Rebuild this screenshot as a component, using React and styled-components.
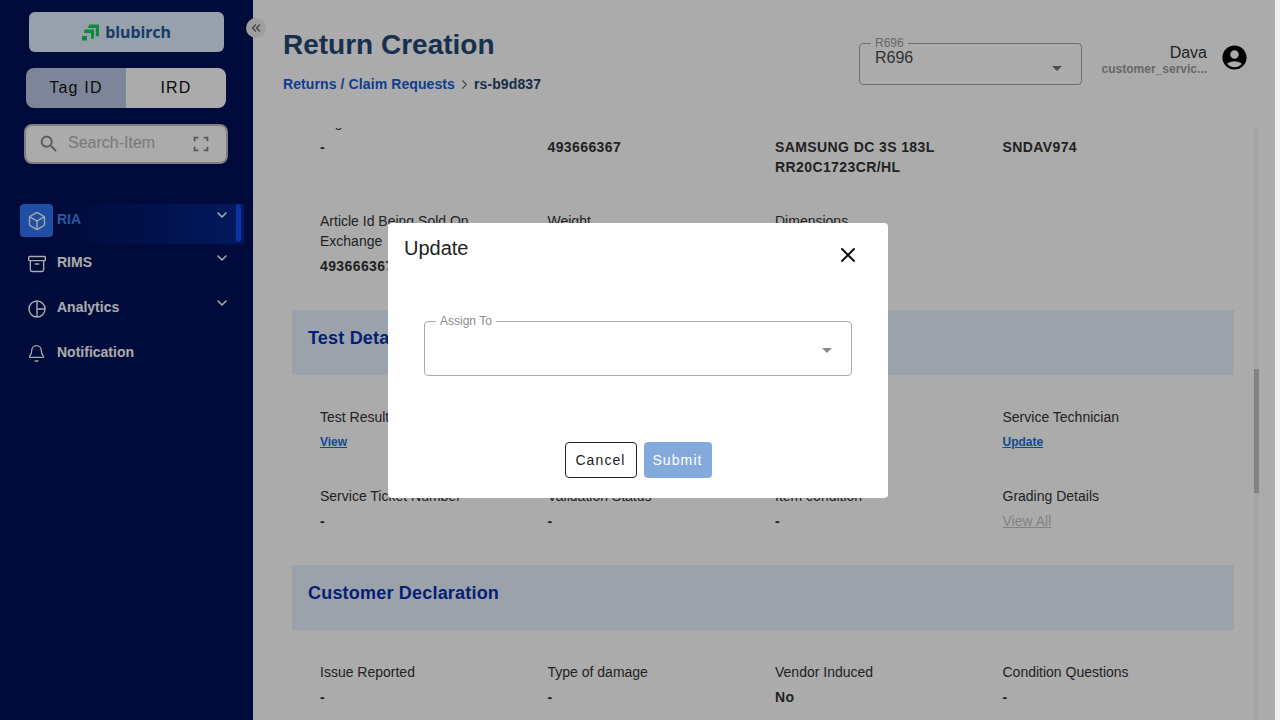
import React from "react";
import styled, { createGlobalStyle } from "styled-components";
import { Archive, Bell, Box, ChevronDown, ChevronRight, ChevronsLeft, X } from "lucide-react";

const GlobalStyle = createGlobalStyle`
	html, body {
		margin: 0;
		height: 100%;
		overflow: hidden;
		background: #f0f0f0;
	}
	* {
		box-sizing: border-box;
	}
	body {
		font-family: "Liberation Sans", Arial, sans-serif;
	}
`;

const Page = styled.div`
	display: flex;
	width: 1275px;
	height: 720px;
	background: #fff;
	position: relative;
	overflow: hidden;
`;

// sidebar
const Sidebar = styled.aside`
	width: 253px;
	flex: none;
	background: #001159;
	display: flex;
	flex-direction: column;
	position: relative;
`;

const LogoCard = styled.div`
	height: 40px;
	margin: 12px 29px 16px;
	background: #e3f1ff;
	border-radius: 6px;
	display: flex;
	align-items: center;
	justify-content: center;
	gap: 6px;
`;

const LogoText = styled.span`
	font-family: "Noto Sans", sans-serif;
	font-weight: 700;
	font-size: 16px;
	color: #1d5a9e;
`;

const Toggle = styled.div`
	height: 40px;
	margin: 0 27px 16px 26px;
	border-radius: 8px;
	overflow: hidden;
	display: grid;
	grid-template-columns: 1fr 1fr;
`;

const ToggleOption = styled.div`
	display: flex;
	align-items: center;
	justify-content: center;
	font-size: 16px;
	letter-spacing: 1.2px;
	color: #111;
	background: ${(p) => (p.$active ? "#bbc8e3" : "#fff")};
`;

const SearchBox = styled.div`
	height: 40px;
	margin: 0 25px 0 24px;
	background: #fff;
	border: 2px solid #bdbdbd;
	border-radius: 8px;
	display: flex;
	align-items: center;
	padding: 0 14px 0 12px;
	color: #858585;
`;

const SearchText = styled.span`
	flex: 1;
	font-size: 16px;
	color: #b4b4b4;
	margin-left: 8px;
	margin-top: -2px;
`;

const CollapseButton = styled.button`
	position: absolute;
	top: 18px;
	right: -13px;
	width: 20px;
	height: 20px;
	padding: 0;
	border: none;
	border-radius: 50%;
	background: #ececec;
	color: #666;
	display: flex;
	align-items: center;
	justify-content: center;
`;

const Nav = styled.nav`
	margin-top: 40px;
	display: flex;
	flex-direction: column;
`;

const NavItem = styled.div`
	height: ${(p) => p.$h || 45}px;
	display: flex;
	align-items: flex-start;
	margin-left: 20px;
	margin-right: 9px;
	position: relative;
	color: ${(p) => (p.$active ? "#3f84ea" : "#fff")};
	background: ${(p) =>
		p.$active ? "linear-gradient(90deg, rgba(0, 38, 140, 0) 20%, #00268c 100%)" : "none"};
	height: ${(p) => (p.$active ? 40 : 45)}px;
	margin-bottom: ${(p) => (p.$active ? 3 : 0)}px;
`;

const NavIcon = styled.div`
	width: 33px;
	height: 33px;
	flex: none;
	border-radius: 4px;
	display: flex;
	align-items: center;
	justify-content: center;
	color: #fff;
	background: ${(p) => (p.$active ? "#2f76f5" : "none")};
`;

const NavLabel = styled.span`
	flex: 1;
	font-size: 14px;
	font-weight: 700;
	line-height: 31px;
	margin-left: 4px;
`;

const NavChevron = styled.div`
	width: 16px;
	margin: 3px 14px 0 0;
	color: #fff;
`;

const ActiveBar = styled.div`
	position: absolute;
	top: 0;
	right: 3px;
	width: 5px;
	height: 38px;
	border-radius: 3px;
	background: #0f4cf0;
`;

// main column
const Main = styled.main`
	flex: 1;
	min-width: 0;
	display: flex;
	flex-direction: column;
`;

const Header = styled.header`
	height: 128px;
	flex: none;
	display: flex;
	justify-content: space-between;
	padding: 28px 26px 0 30px;
`;

const Title = styled.h1`
	margin: 0;
	font-size: 28px;
	line-height: 34px;
	font-weight: 700;
	color: #234874;
`;

const Crumbs = styled.div`
	display: flex;
	align-items: center;
	margin-top: 14px;
	font-size: 14px;
	font-weight: 700;
	letter-spacing: 0.1px;
`;

const CrumbLink = styled.span`
	color: #155bd8;
`;

const CrumbCurrent = styled.span`
	color: #274468;
`;

const CrumbSep = styled.span`
	display: flex;
	margin: 0 2px;
	color: #777;
`;

const HeaderRight = styled.div`
	display: flex;
	align-items: flex-start;
	margin-top: 9px;
`;

const OutlinedField = styled.fieldset`
	margin: 0;
	min-width: 0;
	position: relative;
	border-radius: 4px;
	border: 1px solid ${(p) => (p.$modal ? "#ababab" : "#a6a6a6")};
	width: ${(p) => (p.$modal ? 428 : 223)}px;
	height: ${(p) => (p.$modal ? 61 : 48)}px;
	padding: 0 15px;
`;

const FieldLegend = styled.legend`
	font-size: 12px;
	line-height: 12px;
	padding: 0 4px;
	margin-left: -4px;
	color: ${(p) => (p.$modal ? "#8c8c8c" : "#9a9a9a")};
`;

const FieldValue = styled.div`
	font-size: 16px;
	line-height: 20px;
	margin-top: -1px;
	color: #4b4b4b;
`;

const FieldArrow = styled.span`
	position: absolute;
	right: 19px;
	top: ${(p) => (p.$modal ? 21 : 17)}px;
	width: 0;
	height: 0;
	border-left: 5px solid transparent;
	border-right: 5px solid transparent;
	border-top: 5px solid ${(p) => (p.$modal ? "#8a8a8a" : "#747474")};
`;

const UserBlock = styled.div`
	width: 125px;
	text-align: right;
	padding-top: 7px;
`;

const UserName = styled.div`
	font-size: 16px;
	line-height: 18px;
	color: #333;
`;

const UserRole = styled.div`
	font-size: 12px;
	line-height: 14px;
	font-weight: 700;
	color: #9b9b9b;
	white-space: nowrap;
`;

const Avatar = styled.svg`
	width: 29px;
	height: 29px;
	margin: 6px 0 0 13px;
	fill: #000;
`;

// scrolled details
const ScrollArea = styled.div`
	flex: 1;
	min-height: 0;
	display: flex;
	padding-left: 39px;
	overflow: hidden;
`;

const ScrollContent = styled.div`
	flex: 1;
	min-width: 0;
	margin-top: -16px;
	margin-right: 20px;
`;

const Track = styled.div`
	width: 5px;
	margin-top: 1px;
	margin-right: 16px;
	background: #f5f5f5;
	padding-top: 240px;
`;

const Thumb = styled.div`
	height: 124px;
	background: #c2c2c2;
`;

const Fields = styled.div`
	display: grid;
	grid-template-columns: repeat(4, 1fr);
	row-gap: 34px;
	padding: ${(p) => (p.$afterBand ? "32px" : "0")} 4px 34px 28px;
`;

const Band = styled.div`
	height: 65px;
	background: #e9f2ff;
	padding: 16px 16px 0;
	font-size: 18px;
	line-height: 24px;
	font-weight: 700;
	color: #0530b0;
	letter-spacing: 0.2px;
`;

const Field = styled.div`
	padding-right: 24px;
`;

const Label = styled.div`
	font-size: 14px;
	line-height: 20px;
	color: #333;
	margin-bottom: 5px;
`;

const Value = styled.div`
	font-size: 14px;
	line-height: 20px;
	font-weight: 700;
	letter-spacing: 0.4px;
	color: #333;
`;

const SmallLink = styled.a`
	display: block;
	font-size: 12px;
	line-height: 20px;
	font-weight: 700;
	color: #1a6fd0;
	text-decoration: underline;
`;

const MutedLink = styled.a`
	display: block;
	font-size: 14px;
	line-height: 20px;
	color: #c4c4c4;
	text-decoration: underline;
`;

// dialog
const Backdrop = styled.div`
	position: absolute;
	inset: 0;
	background: rgba(0, 0, 0, 0.33);
	display: flex;
	align-items: center;
	justify-content: center;
	padding-left: 1px;
`;

const Dialog = styled.div`
	width: 500px;
	height: 275px;
	background: #fff;
	border-radius: 4px;
	display: flex;
	flex-direction: column;
	margin-top: 1px;
`;

const DialogHead = styled.div`
	display: flex;
	justify-content: space-between;
	padding: 13px 28px 0 16px;
	height: 92px;
`;

const DialogTitle = styled.h2`
	margin: 0;
	font-size: 20px;
	line-height: 24px;
	font-weight: 400;
	color: #222;
`;

const CloseButton = styled.button`
	border: none;
	background: none;
	padding: 0;
	height: 24px;
	margin-top: 7px;
	color: #111;
	display: flex;
`;

const DialogBody = styled.div`
	display: flex;
	justify-content: center;
	padding-right: 0;
`;

const DialogFoot = styled.div`
	display: flex;
	justify-content: center;
	gap: 7px;
	margin-top: 66px;
`;

const Button = styled.button`
	height: 36px;
	padding: 0;
	width: ${(p) => (p.$primary ? 68 : 72)}px;
	border-radius: 4px;
	font-family: inherit;
	font-size: 14px;
	letter-spacing: 1.1px;
	border: ${(p) => (p.$primary ? "none" : "1px solid #222")};
	background: ${(p) => (p.$primary ? "#84aadc" : "#fff")};
	color: ${(p) => (p.$primary ? "#fff" : "#222")};
`;

const navItems = [
	{ label: "RIA", icon: <Box size={20} strokeWidth={1.6} />, active: true, chevron: true },
	{ label: "RIMS", icon: <Archive size={20} strokeWidth={1.6} />, chevron: true },
	{ label: "Analytics", icon: <AnalyticsIcon />, chevron: true },
	{ label: "Notification", icon: <Bell size={19} strokeWidth={1.6} /> },
];

function AnalyticsIcon() {
	return (
		<svg width="20" height="20" viewBox="0 0 20 20" fill="none" stroke="currentColor" strokeWidth="1.4">
			<circle cx="10" cy="10" r="8" />
			<path d="M10 2v16M10 10h8" />
		</svg>
	);
}

function LogoMark() {
	return (
		<svg width="17" height="17" viewBox="0 0 17 17" fill="#12ce5a">
			<path d="M7 0.5h10v11.5l-3.2 0.5V4H6z" />
			<path d="M2.5 5.5h9.5v9l-3 0.5V9H2z" />
			<path d="M0 12h5v4.5H0z" />
		</svg>
	);
}

function App() {
	return (
		<>
			<GlobalStyle />
			<Page>
				<Sidebar>
					<LogoCard>
						<LogoMark />
						<LogoText>blubirch</LogoText>
					</LogoCard>
					<Toggle>
						<ToggleOption $active>Tag ID</ToggleOption>
						<ToggleOption>IRD</ToggleOption>
					</Toggle>
					<SearchBox>
						<svg width="22" height="22" viewBox="0 0 24 24" fill="currentColor">
							<path d="M15.5 14h-.79l-.28-.27C15.41 12.59 16 11.11 16 9.5 16 5.91 13.09 3 9.5 3S3 5.91 3 9.5 5.91 16 9.5 16c1.61 0 3.09-.59 4.23-1.57l.27.28v.79l5 4.99L20.49 19l-4.99-5zm-6 0C7.01 14 5 11.99 5 9.5S7.01 5 9.5 5 14 7.01 14 9.5 11.99 14 9.5 14z" />
						</svg>
						<SearchText>Search-Item</SearchText>
						<svg width="22" height="22" viewBox="0 0 24 24" fill="currentColor">
							<path d="M4 15h2v3h3v2H4v-5zm0-6V4h5v2H6v3H4zm16 6v5h-5v-2h3v-3h2zM15 4h5v5h-2V6h-3V4z" />
						</svg>
					</SearchBox>
					<Nav>
						{navItems.map((item) => (
							<NavItem key={item.label} $active={item.active}>
								<NavIcon $active={item.active}>{item.icon}</NavIcon>
								<NavLabel>{item.label}</NavLabel>
								{item.chevron && (
									<NavChevron>
										<ChevronDown size={16} strokeWidth={2.4} />
									</NavChevron>
								)}
								{item.active && <ActiveBar />}
							</NavItem>
						))}
					</Nav>
					<CollapseButton>
						<ChevronsLeft size={14} strokeWidth={2.4} />
					</CollapseButton>
				</Sidebar>

				<Main>
					<Header>
						<div>
							<Title>Return Creation</Title>
							<Crumbs>
								<CrumbLink>Returns / Claim Requests</CrumbLink>
								<CrumbSep>
									<ChevronRight size={15} strokeWidth={2} />
								</CrumbSep>
								<CrumbCurrent>rs-b9d837</CrumbCurrent>
							</Crumbs>
						</div>
						<HeaderRight>
							<OutlinedField>
								<FieldLegend>R696</FieldLegend>
								<FieldValue>R696</FieldValue>
								<FieldArrow />
							</OutlinedField>
							<UserBlock>
								<UserName>Dava</UserName>
								<UserRole>customer_servic...</UserRole>
							</UserBlock>
							<Avatar viewBox="0 0 24 24">
								<path d="M12 2C6.48 2 2 6.48 2 12s4.48 10 10 10 10-4.48 10-10S17.52 2 12 2zm0 4c1.93 0 3.5 1.57 3.5 3.5S13.93 13 12 13s-3.5-1.57-3.5-3.5S10.07 6 12 6zm0 14c-2.03 0-4.43-.82-6.14-2.88C7.55 15.8 9.68 15 12 15s4.45.8 6.14 2.12C16.43 19.18 14.03 20 12 20z" />
							</Avatar>
						</HeaderRight>
					</Header>

					<ScrollArea>
						<ScrollContent>
							<Fields>
								<Field>
									<Label>Tag Id</Label>
									<Value>-</Value>
								</Field>
								<Field>
									<Label>Article Id</Label>
									<Value>493666367</Value>
								</Field>
								<Field>
									<Label>Model Name</Label>
									<Value>SAMSUNG DC 3S 183L RR20C1723CR/HL</Value>
								</Field>
								<Field>
									<Label>Serial No</Label>
									<Value>SNDAV974</Value>
								</Field>
								<Field>
									<Label>Article Id Being Sold On Exchange</Label>
									<Value>493666367</Value>
								</Field>
								<Field>
									<Label>Weight</Label>
									<Value>-</Value>
								</Field>
								<Field>
									<Label>Dimensions</Label>
									<Value>-</Value>
								</Field>
							</Fields>

							<Band>Test Details</Band>
							<Fields $afterBand>
								<Field>
									<Label>Test Results</Label>
									<SmallLink>View</SmallLink>
								</Field>
								<Field>
									<Label>Test Status</Label>
									<Value>-</Value>
								</Field>
								<Field>
									<Label>Test Date</Label>
									<Value>-</Value>
								</Field>
								<Field>
									<Label>Service Technician</Label>
									<SmallLink>Update</SmallLink>
								</Field>
								<Field>
									<Label>Service Ticket Number</Label>
									<Value>-</Value>
								</Field>
								<Field>
									<Label>Validation Status</Label>
									<Value>-</Value>
								</Field>
								<Field>
									<Label>Item condition</Label>
									<Value>-</Value>
								</Field>
								<Field>
									<Label>Grading Details</Label>
									<MutedLink>View All</MutedLink>
								</Field>
							</Fields>

							<Band>Customer Declaration</Band>
							<Fields $afterBand>
								<Field>
									<Label>Issue Reported</Label>
									<Value>-</Value>
								</Field>
								<Field>
									<Label>Type of damage</Label>
									<Value>-</Value>
								</Field>
								<Field>
									<Label>Vendor Induced</Label>
									<Value>No</Value>
								</Field>
								<Field>
									<Label>Condition Questions</Label>
									<Value>-</Value>
								</Field>
							</Fields>
						</ScrollContent>
						<Track>
							<Thumb />
						</Track>
					</ScrollArea>
				</Main>

				<Backdrop>
					<Dialog>
						<DialogHead>
							<DialogTitle>Update</DialogTitle>
							<CloseButton>
								<X size={24} strokeWidth={2} />
							</CloseButton>
						</DialogHead>
						<DialogBody>
							<OutlinedField $modal>
								<FieldLegend $modal>Assign To</FieldLegend>
								<FieldArrow $modal />
							</OutlinedField>
						</DialogBody>
						<DialogFoot>
							<Button>Cancel</Button>
							<Button $primary>Submit</Button>
						</DialogFoot>
					</Dialog>
				</Backdrop>
			</Page>
		</>
	);
}

export default App;
